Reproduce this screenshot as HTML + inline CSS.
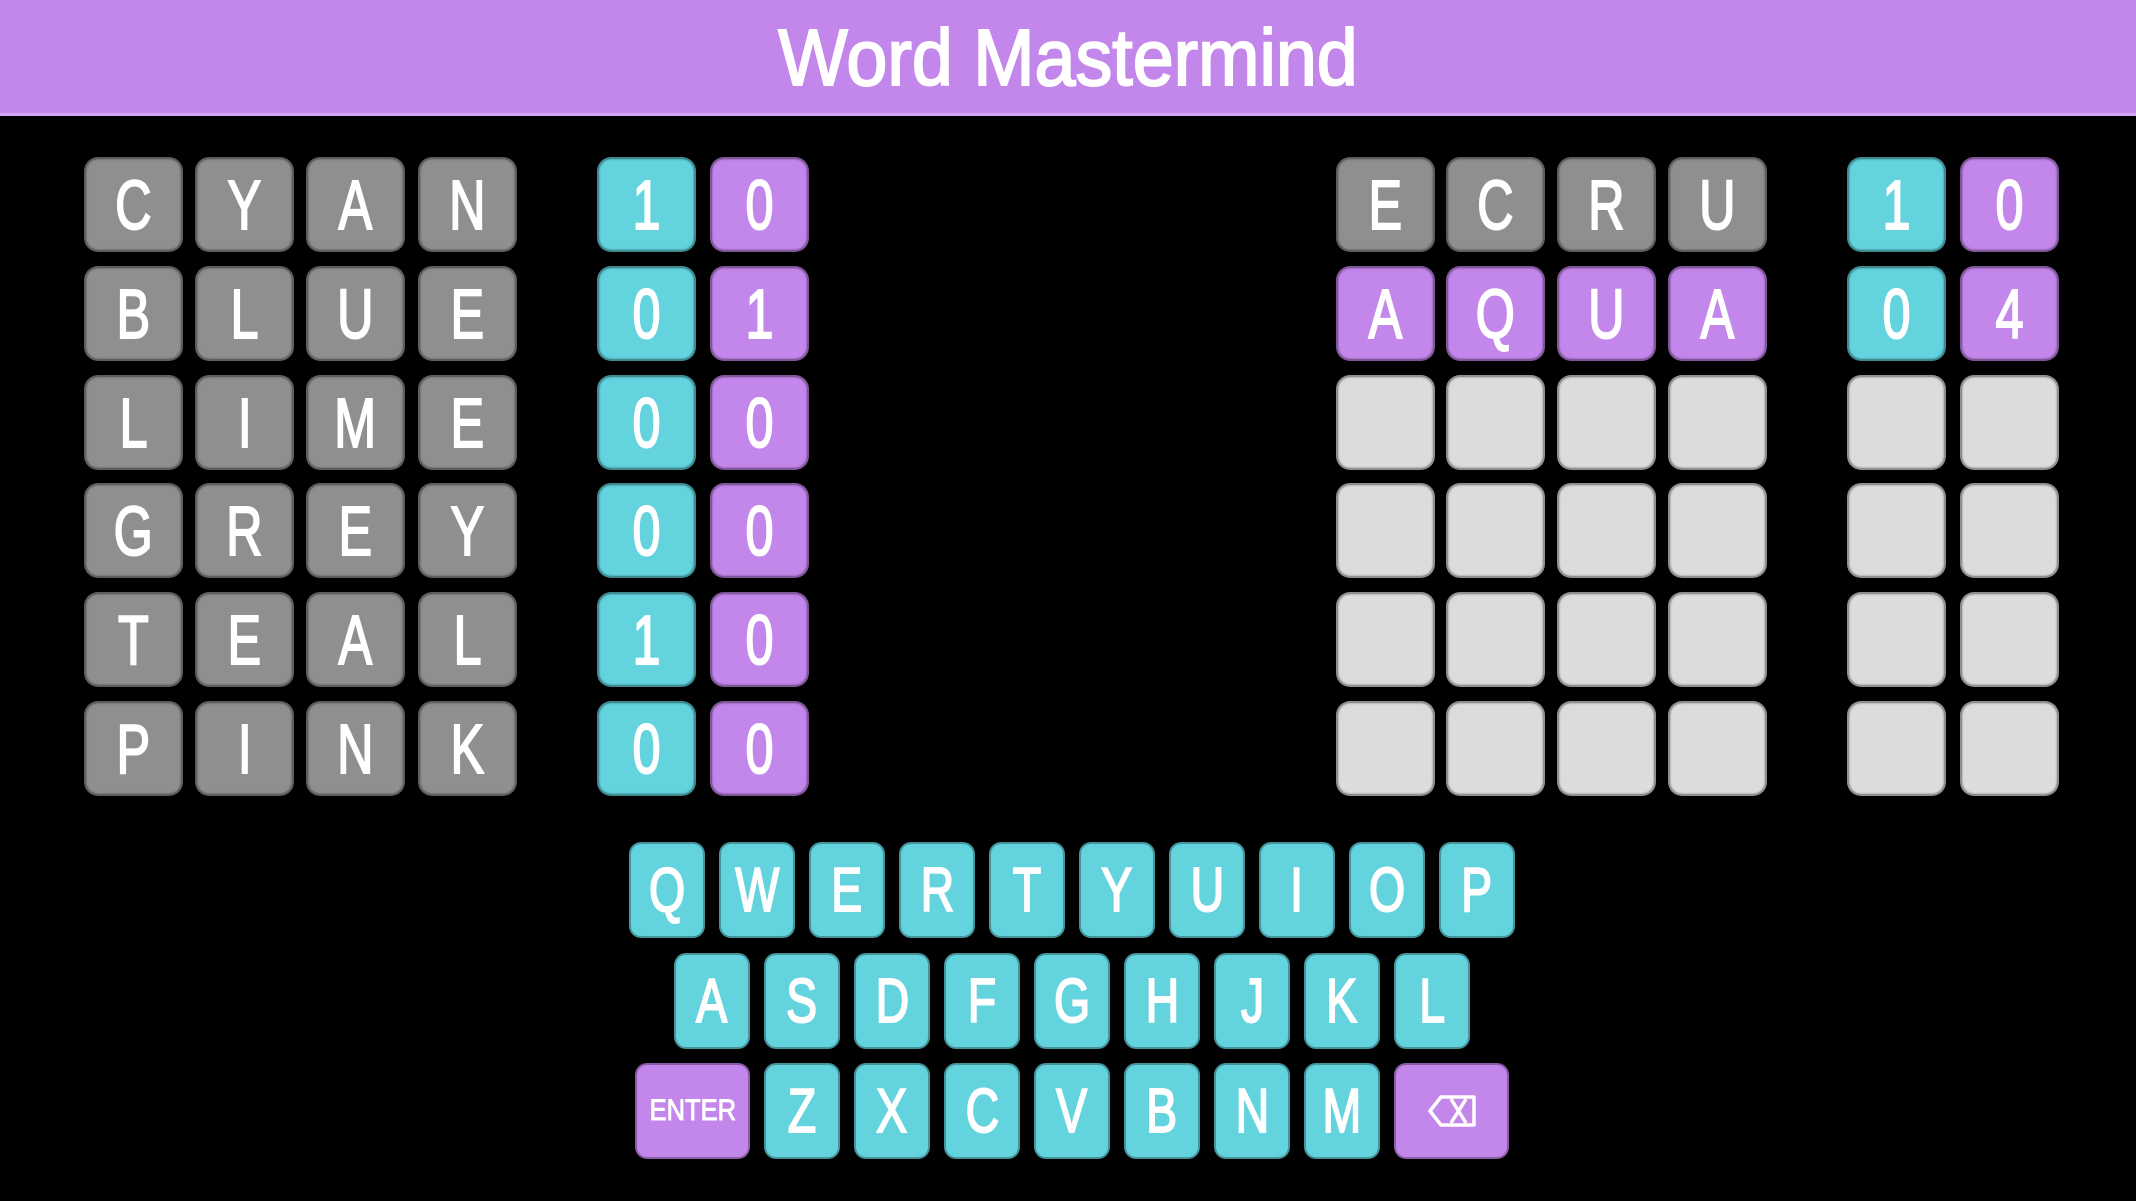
<!DOCTYPE html>
<html><head><meta charset="utf-8"><style>
*{margin:0;padding:0;box-sizing:border-box}
body{width:2136px;height:1201px;background:#000;position:relative;overflow:hidden;font-family:"Liberation Sans",sans-serif}
.hdr{position:absolute;left:0;top:0;width:2136px;height:116px;background:#c386eb;border-bottom:3px solid #d6a6f5}
.hdr span{position:absolute;left:0;width:2136px;top:8px;text-align:center;color:#fff;font-size:80px;line-height:100px;display:block;transform:scaleX(.92);-webkit-text-stroke:2px #fff}
.t{position:absolute;width:99px;height:95px;border-radius:14px;border:2px solid rgba(0,0,0,.35);color:#fff;display:flex;align-items:center;justify-content:center;font-size:70px;box-shadow:inset 0 0 2px rgba(0,0,0,.4)}
.t span,.k span{-webkit-text-stroke:2px #fff}
.t span{display:block;transform:scaleX(.72)}
.g{background:#8f8f8f}
.c{background:#63d3de}
.p{background:#c386eb}
.e{background:#dcdcdc}
.k{position:absolute;width:76px;height:96px;border-radius:12px;background:#63d3de;border:2px solid rgba(0,0,0,.3);color:#fff;display:flex;align-items:center;justify-content:center;font-size:62px}
.k span{display:block;transform:scaleX(.75)}
</style></head><body>
<div class="hdr"><span>Word Mastermind</span></div>

<div class="t g" style="left:84px;top:157px"><span>C</span></div>
<div class="t g" style="left:195px;top:157px"><span>Y</span></div>
<div class="t g" style="left:306px;top:157px"><span>A</span></div>
<div class="t g" style="left:418px;top:157px"><span>N</span></div>
<div class="t c" style="left:597px;top:157px"><span>1</span></div>
<div class="t p" style="left:710px;top:157px"><span>0</span></div>

<div class="t g" style="left:84px;top:266px"><span>B</span></div>
<div class="t g" style="left:195px;top:266px"><span>L</span></div>
<div class="t g" style="left:306px;top:266px"><span>U</span></div>
<div class="t g" style="left:418px;top:266px"><span>E</span></div>
<div class="t c" style="left:597px;top:266px"><span>0</span></div>
<div class="t p" style="left:710px;top:266px"><span>1</span></div>

<div class="t g" style="left:84px;top:375px"><span>L</span></div>
<div class="t g" style="left:195px;top:375px"><span>I</span></div>
<div class="t g" style="left:306px;top:375px"><span>M</span></div>
<div class="t g" style="left:418px;top:375px"><span>E</span></div>
<div class="t c" style="left:597px;top:375px"><span>0</span></div>
<div class="t p" style="left:710px;top:375px"><span>0</span></div>

<div class="t g" style="left:84px;top:483px"><span>G</span></div>
<div class="t g" style="left:195px;top:483px"><span>R</span></div>
<div class="t g" style="left:306px;top:483px"><span>E</span></div>
<div class="t g" style="left:418px;top:483px"><span>Y</span></div>
<div class="t c" style="left:597px;top:483px"><span>0</span></div>
<div class="t p" style="left:710px;top:483px"><span>0</span></div>

<div class="t g" style="left:84px;top:592px"><span>T</span></div>
<div class="t g" style="left:195px;top:592px"><span>E</span></div>
<div class="t g" style="left:306px;top:592px"><span>A</span></div>
<div class="t g" style="left:418px;top:592px"><span>L</span></div>
<div class="t c" style="left:597px;top:592px"><span>1</span></div>
<div class="t p" style="left:710px;top:592px"><span>0</span></div>

<div class="t g" style="left:84px;top:701px"><span>P</span></div>
<div class="t g" style="left:195px;top:701px"><span>I</span></div>
<div class="t g" style="left:306px;top:701px"><span>N</span></div>
<div class="t g" style="left:418px;top:701px"><span>K</span></div>
<div class="t c" style="left:597px;top:701px"><span>0</span></div>
<div class="t p" style="left:710px;top:701px"><span>0</span></div>

<div class="t g" style="left:1336px;top:157px"><span>E</span></div>
<div class="t g" style="left:1446px;top:157px"><span>C</span></div>
<div class="t g" style="left:1557px;top:157px"><span>R</span></div>
<div class="t g" style="left:1668px;top:157px"><span>U</span></div>
<div class="t c" style="left:1847px;top:157px"><span>1</span></div>
<div class="t p" style="left:1960px;top:157px"><span>0</span></div>

<div class="t p" style="left:1336px;top:266px"><span>A</span></div>
<div class="t p" style="left:1446px;top:266px"><span>Q</span></div>
<div class="t p" style="left:1557px;top:266px"><span>U</span></div>
<div class="t p" style="left:1668px;top:266px"><span>A</span></div>
<div class="t c" style="left:1847px;top:266px"><span>0</span></div>
<div class="t p" style="left:1960px;top:266px"><span>4</span></div>

<div class="t e" style="left:1336px;top:375px"></div><div class="t e" style="left:1446px;top:375px"></div><div class="t e" style="left:1557px;top:375px"></div><div class="t e" style="left:1668px;top:375px"></div><div class="t e" style="left:1847px;top:375px"></div><div class="t e" style="left:1960px;top:375px"></div>
<div class="t e" style="left:1336px;top:483px"></div><div class="t e" style="left:1446px;top:483px"></div><div class="t e" style="left:1557px;top:483px"></div><div class="t e" style="left:1668px;top:483px"></div><div class="t e" style="left:1847px;top:483px"></div><div class="t e" style="left:1960px;top:483px"></div>
<div class="t e" style="left:1336px;top:592px"></div><div class="t e" style="left:1446px;top:592px"></div><div class="t e" style="left:1557px;top:592px"></div><div class="t e" style="left:1668px;top:592px"></div><div class="t e" style="left:1847px;top:592px"></div><div class="t e" style="left:1960px;top:592px"></div>
<div class="t e" style="left:1336px;top:701px"></div><div class="t e" style="left:1446px;top:701px"></div><div class="t e" style="left:1557px;top:701px"></div><div class="t e" style="left:1668px;top:701px"></div><div class="t e" style="left:1847px;top:701px"></div><div class="t e" style="left:1960px;top:701px"></div>

<div class="k" style="left:629px;top:842px"><span>Q</span></div>
<div class="k" style="left:719px;top:842px"><span>W</span></div>
<div class="k" style="left:809px;top:842px"><span>E</span></div>
<div class="k" style="left:899px;top:842px"><span>R</span></div>
<div class="k" style="left:989px;top:842px"><span>T</span></div>
<div class="k" style="left:1079px;top:842px"><span>Y</span></div>
<div class="k" style="left:1169px;top:842px"><span>U</span></div>
<div class="k" style="left:1259px;top:842px"><span>I</span></div>
<div class="k" style="left:1349px;top:842px"><span>O</span></div>
<div class="k" style="left:1439px;top:842px"><span>P</span></div>

<div class="k" style="left:674px;top:953px"><span>A</span></div>
<div class="k" style="left:764px;top:953px"><span>S</span></div>
<div class="k" style="left:854px;top:953px"><span>D</span></div>
<div class="k" style="left:944px;top:953px"><span>F</span></div>
<div class="k" style="left:1034px;top:953px"><span>G</span></div>
<div class="k" style="left:1124px;top:953px"><span>H</span></div>
<div class="k" style="left:1214px;top:953px"><span>J</span></div>
<div class="k" style="left:1304px;top:953px"><span>K</span></div>
<div class="k" style="left:1394px;top:953px"><span>L</span></div>

<div class="k" style="left:635px;top:1063px;width:115px;background:#c386eb;font-size:30px"><span style="transform:scaleX(.85);-webkit-text-stroke:1px #fff">ENTER</span></div>
<div class="k" style="left:764px;top:1063px"><span>Z</span></div>
<div class="k" style="left:854px;top:1063px"><span>X</span></div>
<div class="k" style="left:944px;top:1063px"><span>C</span></div>
<div class="k" style="left:1034px;top:1063px"><span>V</span></div>
<div class="k" style="left:1124px;top:1063px"><span>B</span></div>
<div class="k" style="left:1214px;top:1063px"><span>N</span></div>
<div class="k" style="left:1304px;top:1063px"><span>M</span></div>
<div class="k" style="left:1394px;top:1063px;width:115px;background:#c386eb">
<svg width="50" height="34" viewBox="0 0 50 34"><path d="M14 3H47V31H14L3 17Z" fill="none" stroke="#fff" stroke-width="3.5" stroke-linejoin="round"/><path d="M24 5L39 29M39 5L24 29" stroke="#fff" stroke-width="3.5"/></svg>
</div>
</body></html>
